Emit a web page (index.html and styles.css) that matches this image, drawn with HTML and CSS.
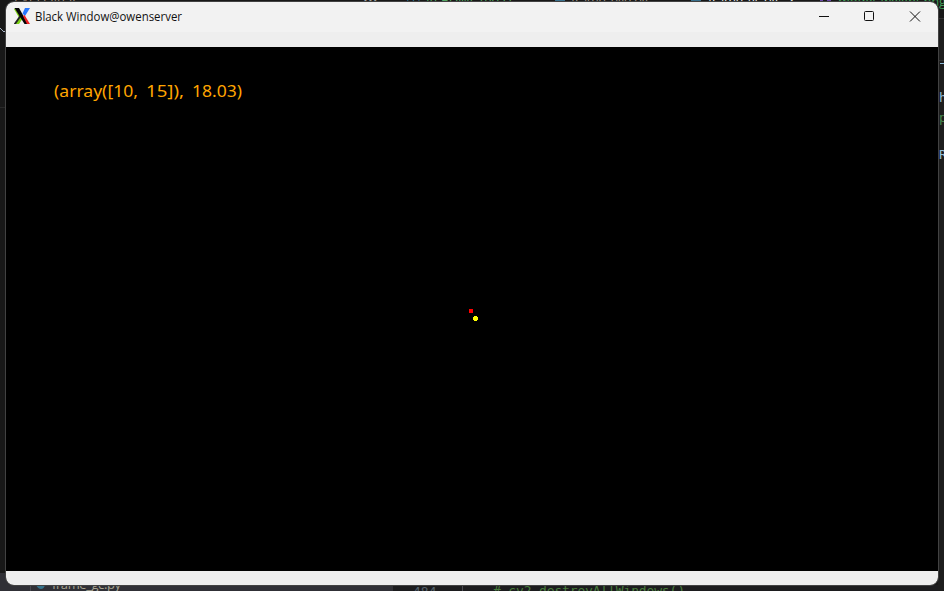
FILE: index.html
```html
<!DOCTYPE html>
<html lang="en">
<head>
<meta charset="utf-8">
<title>Black Window@owenserver</title>
<link rel="stylesheet" href="styles.css">
</head>
<body>
<div class="desktop">
  <!-- Editor behind the window -->
  <svg class="editor" width="944" height="591" viewBox="0 0 944 591">
    <rect width="944" height="591" fill="#181818"/>
    <rect y="573" width="393" height="18" fill="#303036"/>
    <rect x="393" y="585" width="551" height="6" fill="#1c1c1e"/>
    <rect x="938" y="18" width="6" height="573" fill="#1d1d1d"/>
    <path d="M938 18.500h6M938 60.500h6" stroke="#303030"/>
    <path d="M0 28l4 4 4-4" fill="none" stroke="#a8b4c4"/>
    <path d="M0 107.500h6" stroke="#292929"/>
    <path d="M30.500 585v6M462.500 585v6" stroke="#494950"/>
    <path d="M36 585h9q-1 4-4 4t-5-4" fill="#35728b"/>
    <path d="M555 0h10v2h-10zM691 0h10v2h-10z" fill="#39708d"/>
    <path d="M820 0h3v2h-3zM827 0h4v2h-4z" fill="#6845a8"/>
    <g class="ui">
      <text x="14" y="4" fill="#9b8b7d">EXPLORER</text>
      <text x="363" y="6" fill="#aaa">•••</text>
      <text x="407" y="4" fill="#3587aa">ⓘ</text>
      <text x="426" y="4" fill="#54a663" textLength="86">README.md U</text>
      <text x="571" y="5" fill="#999184" textLength="77">frame_eye.py</text>
      <text x="708" y="5" fill="#e7e7e7" textLength="70">frame_gc.py</text>
      <text x="788" y="5" fill="#ddd">×</text>
      <text x="838" y="6" fill="#43a15a" textLength="108">model_weight.png</text>
      <text x="52" y="588.500" fill="#a6a391" textLength="69">frame_gc.py</text>
    </g>
    <g class="code">
      <text x="413" y="596" fill="#53606b">484</text>
      <text x="493" y="595" fill="#477b3b" textLength="192"># cv2.destroyAllWindows()</text>
      <text x="939" y="102" fill="#91bcd9">h</text>
      <text x="939" y="122" fill="#47854c">p</text>
      <text x="939" y="159" fill="#91bcd9">R</text>
    </g>
    <path d="M940 63.500h4" stroke="#91bcd9"/>
  </svg>

  <main class="window">
    <header class="titlebar">
      <svg class="logo" width="16" height="16" viewBox="0 0 16 16">
        <path d="M11 0H16L11 8 8.500 5.500z" fill="#2878ff"/>
        <path d="M1 16h4L9 10 6.500 7.500z" fill="#7bd313"/>
        <path d="M0 1l1-.5 5 7-1 2z" fill="#7bd313"/>
        <path d="M0 15.500L6 7l1.500 1L2 16H0z" fill="#222"/>
        <path d="M.5 0H5L14 16H10.500z" fill="#050505"/>
        <path d="M9 8L10.500 7 16 16h-3z" fill="#ed2024"/>
      </svg>
      <svg class="title" width="150" height="30"><text x="0" y="19" textLength="147" lengthAdjust="spacingAndGlyphs">Black Window@owenserver</text></svg>
      <div class="controls">
        <svg width="46" height="30"><path d="M18 14.500h10"/></svg>
        <svg width="46" height="30"><rect x="17.500" y="9.500" width="9" height="9" rx="1"/></svg>
        <svg width="45" height="30"><path d="M17 9.500l10 10m0-10l-10 10"/></svg>
      </div>
    </header>
    <div class="toolbar"></div>
    <svg class="canvas" width="932" height="524" viewBox="6 47 932 524">
      <text class="reading" y="96.500"><tspan x="54" textLength="84" lengthAdjust="spacingAndGlyphs">(array([10,</tspan> <tspan x="146" textLength="38" lengthAdjust="spacingAndGlyphs">15]),</tspan> <tspan x="192" textLength="50" lengthAdjust="spacingAndGlyphs">18.03)</tspan></text>
      <rect x="469" y="309" width="4" height="4" fill="red" shape-rendering="crispEdges"/>
      <path d="M474 316h3v1h1v3h-1v1h-3v-1h-1v-3h1z" fill="#ff0" shape-rendering="crispEdges"/>
    </svg>
    <footer class="statusbar"></footer>
  </main>
</div>
</body>
</html>
```

FILE: styles.css
```css
body {
  margin: 0;
  overflow: hidden;
}

.desktop {
  position: relative;
  width: 944px;
  height: 591px;
  background: #181818;
}

.editor {
  display: block;
}

.ui {
  font: 13px "Open Sans", sans-serif;
}

.code {
  font: 13px "DejaVu Sans Mono", monospace;
}

.window {
  position: absolute;
  left: 6px;
  top: 2px;
  width: 932px;
  height: 583px;
  display: flex;
  flex-direction: column;
  overflow: hidden;
  border-radius: 8px;
  background: #eee;
  outline: 1px solid #424242;
}

.titlebar {
  height: 30px;
  display: flex;
  align-items: center;
  padding-left: 8px;
  background: #f2f2f2;
}

.logo {
  margin-top: -2px;
}

.title {
  margin-left: 5px;
  font: 12px "Open Sans", sans-serif;
  fill: #111;
}

.controls {
  display: flex;
  margin-left: auto;
}

.controls svg {
  fill: none;
  stroke: #111;
}

.toolbar {
  height: 15px;
  background: #eee;
}

.canvas {
  display: block;
  background: #000;
}

.reading {
  font: 16px "Noto Sans", sans-serif;
  fill: orange;
}

.statusbar {
  flex: 1;
  background: #eee;
}
```
